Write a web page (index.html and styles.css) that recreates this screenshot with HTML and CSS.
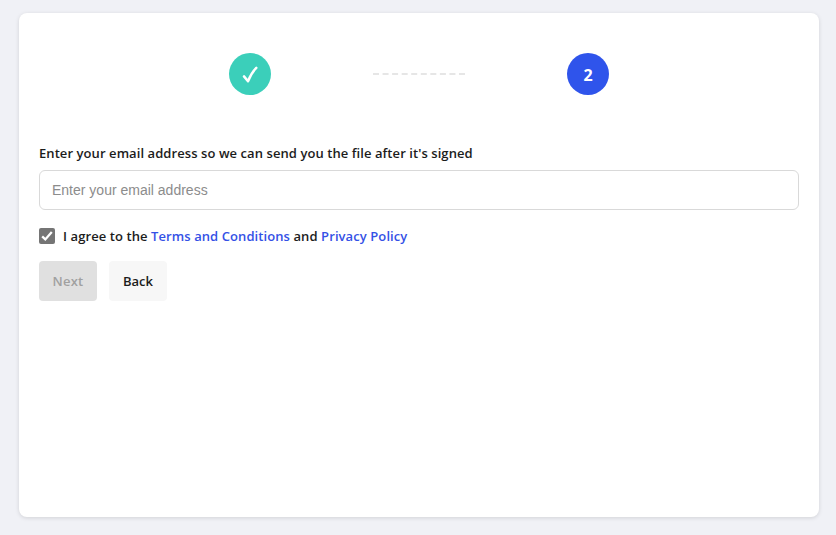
FILE: index.html
```html
<!DOCTYPE html>
<html lang="en">
<head>
<meta charset="utf-8">
<title>Sign document</title>
<link rel="stylesheet" href="styles.css">
</head>
<body>
<main class="card">
  <div class="steps">
    <div class="step step-done">
      <svg width="42" height="42" viewBox="0 0 42 42" fill="none" aria-hidden="true"><path d="M15 23.4 L19 28.3 C20.8 23.6 23.4 18.8 27.3 14.8" stroke="#fff" stroke-width="2.5" stroke-linecap="round" stroke-linejoin="round"/></svg>
    </div>
    <svg class="connector" width="92" height="2" viewBox="0 0 92 2" aria-hidden="true"><path d="M0 1H92" stroke="#e6e6e6" stroke-width="2" stroke-dasharray="6 3.555"/></svg>
    <div class="step step-current"><span>2</span></div>
  </div>
  <form class="form">
    <label class="label" for="email">Enter your email address so we can send you the file after it's signed</label>
    <input class="input" id="email" type="text" placeholder="Enter your email address">
    <div class="agree">
      <span class="checkbox"><svg width="16" height="16" viewBox="0 0 16 16" fill="none" aria-hidden="true"><path d="M3.2 8.4L6.3 11.4L12.8 3.9" stroke="#fff" stroke-width="2.3"/></svg></span>
      <span class="agree-text">I agree to the <a class="link">Terms and Conditions</a> and <a class="link">Privacy Policy</a></span>
    </div>
    <div class="actions">
      <button class="btn btn-next" type="button" disabled>Next</button>
      <button class="btn btn-back" type="button">Back</button>
    </div>
  </form>
</main>
</body>
</html>
```
FILE: styles.css
```css
* { box-sizing: border-box; }
body {
  margin: 0;
  height: 535px;
  padding: 13px 17px 18px 19px;
  background: #f0f1f6;
  color: #1c1c1c;
  font: 600 13px/20px "Open Sans", "Noto Sans", sans-serif;
}
.card {
  height: 504px;
  padding: 40px 20px;
  background: #fff;
  border-radius: 8px;
  box-shadow: 0 1px 4px rgba(0, 0, 0, .13);
}
.steps {
  display: flex;
  align-items: center;
  justify-content: space-between;
  width: 380px;
  margin-left: 190px;
}
.step {
  display: flex;
  align-items: center;
  justify-content: center;
  width: 42px;
  height: 42px;
  border-radius: 50%;
  color: #fff;
  font-size: 16px;
  font-weight: 700;
}
.step-done { background: #3bcfba; }
.step-current { background: #2f54eb; }
.step-current span { padding-top: 1px; }
.form { margin-top: 48px; }
.label { display: block; height: 27px; white-space: nowrap; letter-spacing: .073px; }
.input {
  display: block;
  width: 100%;
  height: 40px;
  padding: 0 12px;
  border: 1px solid #d9d9d9;
  border-radius: 6px;
  background: #fff;
  font: 14px "Liberation Sans", Arial, sans-serif;
}
.input::placeholder { color: #8c8c8c; opacity: 1; }
.agree { display: flex; align-items: center; gap: 8px; height: 20px; margin-top: 16px; }
.checkbox { width: 16px; height: 16px; border-radius: 2px; background: #757575; }
.checkbox svg { display: block; }
.agree-text { white-space: nowrap; letter-spacing: .085px; }
.link { color: #3451e6; }
.actions { display: flex; gap: 12px; margin-top: 15px; }
.btn {
  width: 58px;
  height: 40px;
  padding: 0;
  border: 0;
  border-radius: 4px;
  font: inherit;
}
.btn-next { background: #e0e0e0; color: #a0a0a0; letter-spacing: .2px; }
.btn-back { background: #f7f7f7; color: #1c1c1c; }
```
